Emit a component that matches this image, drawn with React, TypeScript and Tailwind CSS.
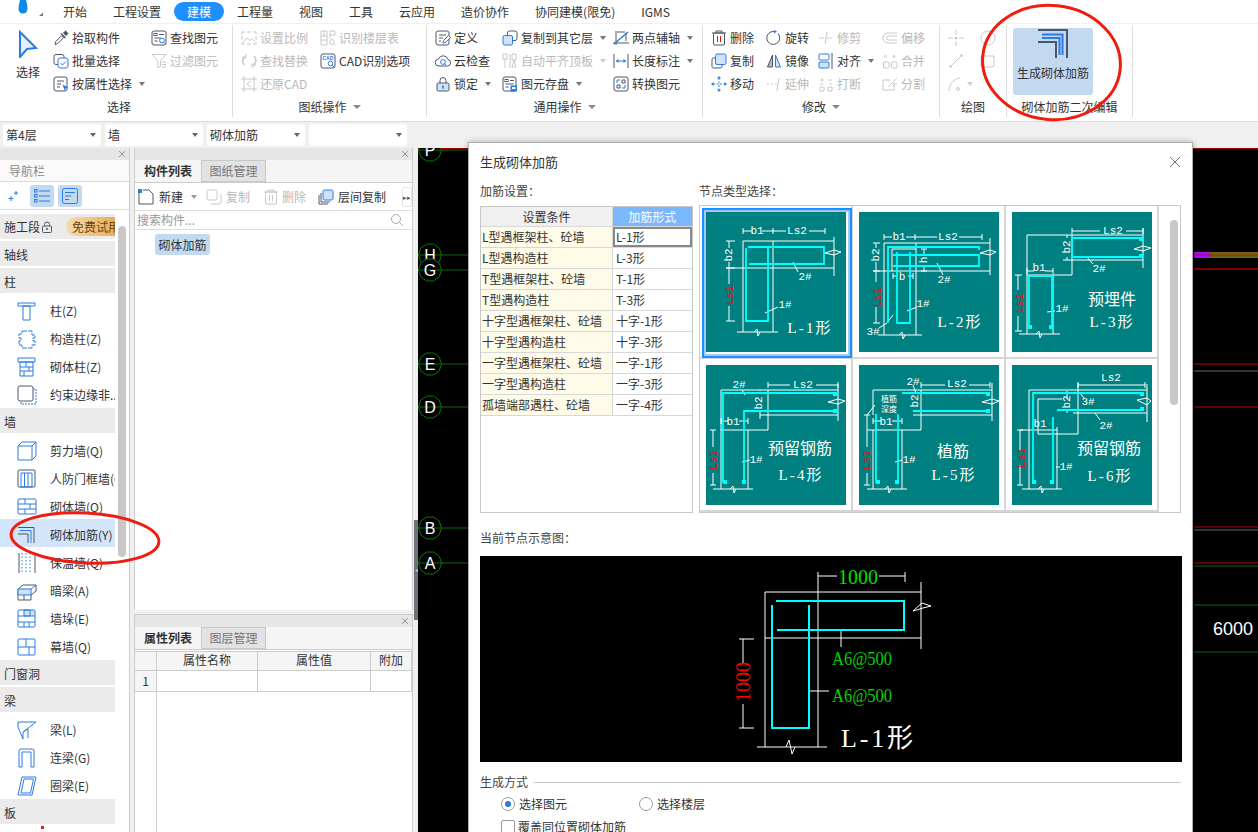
import React from "react";

const B = "#2a7be4";
const G = "#4e5666";
const L = "#c8c8c8";
const F = "#cfe2f8";

const S = ({ children, size = 16 }: { children: React.ReactNode; size?: number }) => (
  <svg width={size} height={size} viewBox="0 0 16 16" fill="none" className="shrink-0">
    {children}
  </svg>
);

const ic: Record<string, React.ReactNode> = {
  pick: <S><path d="M2 14.5l.8-3 5.7-5.7 2 2-5.7 5.7z" stroke={G} /><path d="M8 3.5l4.5 4.5" stroke={G} strokeWidth="1.5" /><path d="M10 3l2.5-2.5 3 3L13 6z" fill={G} /></S>,
  multi: <S><rect x="1" y="1.5" width="10" height="10" rx="2" stroke={G} /><rect x="5" y="5" width="10" height="10" rx="2" stroke={B} fill="#fff" /><path d="M7.5 10l2 2 3.5-3.5" stroke={B} /></S>,
  attr: <S><rect x="1" y="1" width="13" height="14" rx="2" stroke={G} /><path d="M4 5h7M4 8h4M4 11h3" stroke={G} /><path d="M9.5 8.5l6 3-2.7.8-1 2.7z" fill={B} /></S>,
  find: <S><rect x="1" y="1" width="14" height="14" rx="2" stroke={G} /><rect x="3" y="3.5" width="3" height="2" stroke={G} /><path d="M8 4.5h5M3.5 8h6M3.5 11h3" stroke={G} /><circle cx="11" cy="10.5" r="2.4" stroke={B} fill="#fff" /><path d="M12.8 12.3l2 2" stroke={B} /></S>,
  filter: <S><path d="M1 1.5h14L9.5 8v5.5L7 15V8z" stroke={L} /><path d="M11 9h4M11 11.5h4M11 14h4" stroke={L} /></S>,
  scale: <S><path d="M1 4V2h3M12 2h3v2M1 12v2h3M15 12v2h-3M6 2h4M6 14h4M1 6v4M15 6v4" stroke={L} /><path d="M2 12l4-4 3 2.5 2-2 3 3" stroke={L} /></S>,
  layer: <S><path d="M1 1h6v14H1zM1 6h6M1 10h6M4 1v5M10 1h5v4h-5zM10 5v4" stroke={L} /><circle cx="12" cy="12" r="2.4" stroke={L} /><path d="M14 14l1.5 1.5" stroke={L} /></S>,
  replace: <S><path d="M4 3A6.5 6.5 0 0 0 3 12M12 13a6.5 6.5 0 0 0 1-10" stroke={L} strokeWidth="1.5" /><path d="M5 1v4H1M11 15v-4h4" stroke={L} /></S>,
  cadback: <S><path d="M3 0v16M13 0v16M0 3h16M0 13h16" stroke={L} /><path d="M10 5L6 8l4 3" stroke={L} /></S>,
  cad: <S><rect x="1" y="1" width="14" height="14" rx="2" stroke={G} /><text x="2.5" y="7" fontSize="5" fontWeight="700" fill={B} fontFamily="Liberation Sans">CAD</text><circle cx="10.5" cy="10.5" r="2.3" stroke={B} /><path d="M12.2 12.2l2 2" stroke={B} /></S>,
  define: <S><rect x="1" y="1" width="13" height="14" rx="2" stroke={G} /><path d="M4 5h7M4 8h4M4 11h2" stroke={G} /><path d="M8 13l.5-2.5 5-5 2 2-5 5z" stroke={B} fill="#fff" /></S>,
  cloud: <S><path d="M4 13a3.5 3.5 0 0 1-.5-7A5 5 0 0 1 13 6.5 3.3 3.3 0 0 1 12.500 13z" stroke={G} /><circle cx="8" cy="9" r="2.4" stroke={B} /><path d="M9.800 10.800l1.500 1.500" stroke={B} /></S>,
  lock: <S><path d="M5 7V4.500a3 3 0 0 1 6 0V7" stroke={G} /><rect x="2" y="7" width="12" height="8" rx="1.500" stroke={G} fill={F} /><circle cx="8" cy="10.500" r="1" fill={B} /><path d="M8 11v2" stroke={B} /></S>,
  copyto: <S><rect x="5.500" y="1" width="9.500" height="9.500" rx="2" stroke={G} /><rect x="1" y="5.500" width="9.500" height="9.500" rx="1.500" stroke={B} fill={F} /></S>,
  align: <S><path d="M1 1h4v5H1zM3 6v9M8 1v14" stroke={L} /><path d="M10 1h4v6h-4zM12 7l-2 7h4z" stroke={L} /></S>,
  save: <S><rect x="1" y="1" width="13" height="14" rx="2" stroke={G} /><rect x="3" y="3.500" width="3" height="2" stroke={G} /><path d="M8 4.500h4M3.500 8h8M3.500 11h3" stroke={G} /><rect x="8.500" y="9.500" width="6.500" height="6" fill={B} /><rect x="10" y="11" width="3.500" height="2" fill="#fff" /></S>,
  twopt: <S><path d="M3 1v14M0 13h16" stroke={G} /><path d="M1 14L15 2" stroke={B} strokeWidth="1.500" /><path d="M4 2h8M13 3v8" stroke={G} /></S>,
  len: <S><path d="M1 1v14M15 1v14" stroke={G} /><path d="M3 8h10" stroke={B} /><path d="M3 8l2.500-2v4zM13 8l-2.500-2v4z" fill={B} /></S>,
  conv: <S><rect x="1" y="1" width="14" height="14" rx="2" stroke={G} /><path d="M4 7V4h3M9 12h3V9" stroke={B} /><path d="M9 4h3v3H9zM4 9h3v3H4z" stroke={G} /></S>,
  del: <S><path d="M1 3h14M5 3V1h6v2" stroke={G} /><rect x="2.500" y="3" width="11" height="12" rx="1" stroke={G} /><path d="M6.500 6v6M9.500 6v6" stroke="#e01818" /></S>,
  copy: <S><rect x="4.500" y="1" width="10.500" height="10.500" rx="1.500" stroke={B} fill={F} /><path d="M4.500 5H2.500A1.500 1.500 0 0 0 1 6.500v7A1.500 1.500 0 0 0 2.500 15h7a1.500 1.500 0 0 0 1.500-1.500v-2" stroke={G} /></S>,
  move: <S><path d="M8 2v12M2 8h12" stroke={B} strokeDasharray="2 1.500" /><path d="M8 0l2 2.500H6zM8 16l2-2.500H6zM0 8l2.500-2v4zM16 8l-2.500-2v4z" fill={B} /></S>,
  rotate: <S><path d="M12 3.500A6.500 6.500 0 1 1 8 1.500" stroke={G} /><path d="M8 0l3 1.500L8 3.500z" fill={B} /></S>,
  mirror: <S><path d="M6.500 2L1.500 14h5z" stroke={G} fill="#b4b9c2" /><path d="M9.500 2l5 12h-5z" stroke={B} fill={F} /></S>,
  arrange: <S><rect x="1" y="1" width="10" height="6" rx="1" stroke={B} /><rect x="1" y="9" width="10" height="6" rx="1" stroke={B} fill={F} /><path d="M14 0v16" stroke={G} /></S>,
  trim: <S><path d="M1 8h5M9 8h5M9 2L7 14" stroke={L} /></S>,
  extend: <S><path d="M1 8h2M5 8h2M9 8h2" stroke={L} /><path d="M13 2l-2 13" stroke={L} /></S>,
  brk: <S><path d="M2 15v-4h4v4zM10 15v-4h4v4z" stroke={L} /><circle cx="4" cy="4" r="1" stroke={L} /><path d="M10 4h4M2 8h3M11 8h3" stroke={L} /></S>,
  offset: <S><path d="M15 3H6a5 5 0 0 0 0 10h9M15 6H6.500a2 2 0 0 0 0 4H15" stroke={L} /></S>,
  merge: <S><rect x="1.500" y="9" width="5.500" height="6" rx="1" stroke={L} /><rect x="9.500" y="9" width="5.500" height="6" rx="1" stroke={L} /><circle cx="3.500" cy="3.500" r="1" stroke={L} /><circle cx="12" cy="3.500" r="1" stroke={L} /></S>,
  split: <S><path d="M12 7v7H1V4h7" stroke={L} /><path d="M15 2L6 11M15 8h-4" stroke={L} /></S>,
  pt: <S><path d="M8 0v5M8 11v5M0 8h5M11 8h5" stroke={L} /><circle cx="8" cy="8" r="1.500" fill={L} /></S>,
  circle: <S><circle cx="8" cy="8" r="7" stroke={L} /><circle cx="8" cy="8" r="1" fill={L} /></S>,
  line: <S><path d="M2 14L14 2" stroke={L} /><circle cx="2.500" cy="13.500" r="1" stroke={L} /><circle cx="13.500" cy="2.500" r="1" stroke={L} /></S>,
  rect: <S><path d="M3 3h11v9a2 2 0 0 1-2 2H1V3z" stroke={L} /></S>,
  arc: <S><path d="M1 15C1 8 5 3 12 2" stroke={L} /><circle cx="10" cy="13" r="1.500" stroke={L} /></S>,
  copyGray: <S><rect x="1" y="1" width="10" height="10" rx="1.500" stroke={L} /><path d="M5 15h8a2 2 0 0 0 2-2V5" stroke={L} /></S>,
  delGray: <S><path d="M1 3h14M5 3V1h6v2" stroke={L} /><rect x="2.500" y="3" width="11" height="12" rx="1" stroke={L} /><path d="M6.500 6v6M9.500 6v6" stroke={L} /></S>,
  newDoc: <S><path d="M1 4v11h14V5l-4-4H5" stroke={G} /><rect x="0" y="0" width="4" height="4" fill={B} /></S>,
  layerCopy: <S><rect x="5" y="1" width="10" height="10" rx="1.500" stroke={B} fill={F} /><path d="M3 4v9h9M1 6v9h9" stroke={G} /></S>,
  search: <S><circle cx="7" cy="7" r="4.500" stroke="#aaa" /><path d="M10.500 10.500l3.500 3.500" stroke="#aaa" /></S>,
};

function Item({ i, t, dis, arrow }: { i: string; t: string; dis?: boolean; arrow?: boolean }) {
  return (
    <div className={`flex h-[23px] items-center gap-[3px] whitespace-nowrap ${dis ? "text-[#b9b9b9]" : "text-[#333]"}`}>
      {ic[i]}
      <span>{t}</span>
      {arrow && <span className={`ml-[4px] h-0 w-0 border-x-[3px] border-t-[4px] border-x-transparent ${dis ? "border-t-[#ccc]" : "border-t-[#777]"}`} />}
    </div>
  );
}

function GroupLabel({ t, arrow, shift }: { t: string; arrow?: boolean; shift?: boolean }) {
  return (
    <div className={`mt-auto flex h-[20px] items-center justify-center gap-[6px] text-[#333] ${shift ? "pl-[6px]" : ""}`}>
      <span>{t}</span>
      {arrow && <span className="h-0 w-0 border-x-[4px] border-t-[4px] border-x-transparent border-t-[#888]" />}
    </div>
  );
}

function Ribbon() {
  return (
    <div className="flex h-[99px] border-b border-t border-[#dcdcdc] border-t-[#f0f0f0] bg-white text-[12px]">
      <div className="mt-[1px] flex h-[92px] w-[233px] flex-col border-r border-[#ddd]">
        <div className="flex pl-[14px] pt-[1px]">
          <div className="flex h-[69px] w-[28px] flex-col items-center pt-[4px]">
            <svg width="20" height="28" viewBox="0 0 20 28" fill="none"><path d="M2 2l16 16-9 1-7 8z" stroke={B} strokeWidth="2" fill="#e6f0fc" /></svg>
            <span className="mt-[6px] text-[#333]">选择</span>
          </div>
          <div className="ml-[11px] w-[98px]">
            <Item i="pick" t="拾取构件" /><Item i="multi" t="批量选择" /><Item i="attr" t="按属性选择" arrow />
          </div>
          <div><Item i="find" t="查找图元" /><Item i="filter" t="过滤图元" dis /></div>
        </div>
        <GroupLabel t="选择" shift />
      </div>
      <div className="mt-[1px] flex h-[92px] w-[194px] flex-col border-r border-[#ddd]">
        <div className="flex pl-[8px] pt-[1px]">
          <div className="w-[79px]"><Item i="scale" t="设置比例" dis /><Item i="replace" t="查找替换" dis /><Item i="cadback" t="还原CAD" dis /></div>
          <div><Item i="layer" t="识别楼层表" dis /><Item i="cad" t="CAD识别选项" /></div>
        </div>
        <GroupLabel t="图纸操作" arrow />
      </div>
      <div className="mt-[1px] flex h-[92px] w-[276px] flex-col border-r border-[#ddd]">
        <div className="flex pl-[8px] pt-[1px]">
          <div className="w-[67px]"><Item i="define" t="定义" /><Item i="cloud" t="云检查" /><Item i="lock" t="锁定" arrow /></div>
          <div className="w-[111px]"><Item i="copyto" t="复制到其它层" arrow /><Item i="align" t="自动平齐顶板" dis arrow /><Item i="save" t="图元存盘" arrow /></div>
          <div><Item i="twopt" t="两点辅轴" arrow /><Item i="len" t="长度标注" arrow /><Item i="conv" t="转换图元" /></div>
        </div>
        <GroupLabel t="通用操作" arrow />
      </div>
      <div className="mt-[1px] flex h-[92px] w-[237px] flex-col border-r border-[#ddd]">
        <div className="flex pl-[8px] pt-[1px]">
          <div className="w-[55px]"><Item i="del" t="删除" /><Item i="copy" t="复制" /><Item i="move" t="移动" /></div>
          <div className="w-[52px]"><Item i="rotate" t="旋转" /><Item i="mirror" t="镜像" /><Item i="extend" t="延伸" dis /></div>
          <div className="w-[64px]"><Item i="trim" t="修剪" dis /><Item i="arrange" t="对齐" arrow /><Item i="brk" t="打断" dis /></div>
          <div><Item i="offset" t="偏移" dis /><Item i="merge" t="合并" dis /><Item i="split" t="分割" dis /></div>
        </div>
        <GroupLabel t="修改" arrow />
      </div>
      <div className="mt-[1px] flex h-[92px] w-[67px] flex-col border-r border-[#ddd]">
        <div className="flex pl-[8px] pt-[1px]">
          <div className="w-[32px]">
            <div className="flex h-[23px] items-center">{ic.pt}</div>
            <div className="flex h-[23px] items-center">{ic.line}</div>
            <div className="flex h-[23px] items-center gap-[3px]">{ic.arc}<span className="h-0 w-0 border-x-[3px] border-t-[4px] border-x-transparent border-t-[#ccc]" /></div>
          </div>
          <div>
            <div className="flex h-[23px] items-center">{ic.circle}</div>
            <div className="flex h-[23px] items-center">{ic.rect}</div>
          </div>
        </div>
        <GroupLabel t="绘图" />
      </div>
      <div className="mt-[1px] flex h-[92px] w-[126px] flex-col border-r border-[#ddd]">
        <div className="ml-[6px] mt-[3px] flex h-[67px] w-[80px] flex-col items-center rounded-[3px] bg-[#c3d9f0] pt-[1px] text-[#333]">
          <svg width="30" height="30" viewBox="0 0 30 30" fill="none">
            <path d="M0 1H29V29" stroke={G} strokeWidth="2" />
            <path d="M4 5.500H24.500V26" stroke={B} strokeWidth="2" />
            <path d="M4 9H21.500V26" stroke={B} strokeWidth="2" />
            <path d="M0 13H18V29" stroke={G} strokeWidth="2" />
          </svg>
          <span className="mt-[6px] whitespace-nowrap">生成砌体加筋</span>
        </div>
        <GroupLabel t="砌体加筋二次编辑" />
      </div>
    </div>
  );
}

function TabBar() {
  const left = ["工程量", "视图", "工具", "云应用", "造价协作", "协同建模(限免)", "IGMS"];
  return (
    <div className="flex h-[23px] items-center bg-white text-[12px] text-[#333]">
      <div className="flex w-[63px] items-start self-stretch pl-[17px]">
        <svg width="26" height="17" viewBox="0 0 26 17" fill="none"><path d="M3 0h6c1 4 1.500 6 1.500 9a4.500 4.500 0 0 1-9 0C1.500 6 2 4 3 0z" fill="#0e8be8" /><path d="M22 16h4v-3.500z" fill="#777" /></svg>
      </div>
      <span>开始</span>
      <span className="ml-[26px]">工程设置</span>
      <span className="ml-[13px] flex h-[19px] w-[50px] items-center justify-center rounded-full bg-[#1e8fff] text-white">建模</span>
      <div className="ml-[13px] flex gap-[26px]">
        {left.map((t) => <span key={t} className="whitespace-nowrap">{t}</span>)}
      </div>
    </div>
  );
}

function Sel({ t }: { t: string }) {
  return (
    <div className="flex h-[22px] w-[98px] items-center justify-between rounded-[3px] bg-white pl-[3px] pr-[5px] text-[12px] text-[#333]">
      <span>{t}</span>
      <span className="h-0 w-0 border-x-[3px] border-t-[4px] border-x-transparent border-t-[#666]" />
    </div>
  );
}

function Strip() {
  return (
    <div className="flex h-[12px] items-center justify-end bg-[#e6e6e6] pr-[3px]">
      <svg width="8" height="8" viewBox="0 0 8 8"><path d="M1 1l6 6M7 1L1 7" stroke="#999" /></svg>
    </div>
  );
}

const N = ({ children }: { children: React.ReactNode }) => (
  <svg width="20" height="20" viewBox="0 0 20 20" fill="none" className="shrink-0">{children}</svg>
);

const navIcons: Record<string, React.ReactNode> = {
  col: <N><path d="M1 2h17v3H1zM6 5h7v14H6z" stroke={B} /></N>,
  gz: <N><path d="M5 2h10v4h3v3h-2v3h2v4h-3v3H5v-3H2v-4h2V9H2V5h3z" stroke={B} strokeDasharray="5 1" /></N>,
  qt: <N><path d="M1 1h17v4H1zM3 5h13v14H3zM3 10h13M3 14h13M9 5v5M12 10v4M7 14v5" stroke={B} /></N>,
  ys: <N><rect x="1" y="1" width="15" height="15" rx="2" stroke={G} /><path d="M16 4h3v15H4v-3" stroke={B} strokeDasharray="2 1" /></N>,
  jlq: <N><path d="M1 5h14v14H1zM1 5l4-4h14v14l-4 4M15 5l4-4" stroke={B} /></N>,
  rf: <N><rect x="1" y="1" width="17" height="17" rx="1" stroke={G} /><path d="M4 4h11v14H4zM7.500 4v14M11 4v14" stroke={B} /></N>,
  qtq: <N><rect x="1" y="2" width="18" height="15" rx="1" stroke={B} /><path d="M1 7h18M1 12h18M8 2v5M13 7v5M8 12v5" stroke={B} /></N>,
  jj: <N><path d="M1 2.500H17V18" stroke={G} /><path d="M3 5.500H14V18" stroke={B} /><path d="M1 9H11V18" stroke={G} /></N>,
  bw: <N><path d="M2 0v20M18 0v20" stroke={G} /><path d="M5 0v20M9 0v20M13 0v20" stroke={B} strokeDasharray="1.500 2" /></N>,
  al: <N><path d="M1 8l5-4h13v6l-5 4v5H1z" stroke={G} fill="#fff" /><path d="M1 8h13v6H1zM14 8l5-4" stroke={B} fill={F} /><path d="M7 14v5" stroke={G} /></N>,
  qd: <N><rect x="7" y="1" width="11" height="6" fill={F} /><rect x="1" y="1" width="17" height="17" rx="1" stroke={B} /><path d="M7 1v6h6V1zM1 7h17M1 13h17M7 13v5M12 13v5" stroke={B} /></N>,
  mq: <N><rect x="1" y="2" width="17" height="16" rx="1" stroke={B} /><path d="M1 10h17M9 2v8M12 10v8" stroke={B} /></N>,
  liang: <N><path d="M1 2h18L6 12v7L1 7zM6 12l5-3v9" stroke={B} /></N>,
  ll: <N><path d="M2 19V3a2 2 0 0 1 2-2h11a2 2 0 0 1 2 2v16h-3V4H5v15z" stroke={B} /></N>,
  ql: <N><path d="M5 1h14l-4 18H1zM7 3h9.500l-3 14H4z" stroke={B} /></N>,
};

function SecRow({ t }: { t: string }) {
  return <div className="mb-[2px] mt-[1px] flex h-[25px] items-center bg-[#ebebeb] pl-[4px] pt-[2px] text-[#333]">{t}</div>;
}

function NavItem({ i, t }: { i: string; t: string }) {
  return (
    <div className="flex h-[28px] items-center pl-[17px] pt-[3px]">
      {navIcons[i]}
      <span className="ml-[13px] overflow-hidden whitespace-nowrap text-[#333]">{t}</span>
    </div>
  );
}

function Nav() {
  return (
    <div className="flex w-[130px] shrink-0 flex-col border-r border-[#ccc] bg-white text-[12px]">
      <Strip />
      <div className="flex h-[22px] items-center border-b border-[#ddd] bg-[#fafafa] pl-[9px] text-[#888]">导航栏</div>
      <div className="flex h-[28px] items-center border-b border-[#ddd] pl-[8px]">
        <svg width="11" height="11" viewBox="0 0 11 11" fill="none"><path d="M3 6v5M.500 8.500h5M8 1v4M6 3h4" stroke={B} /></svg>
        <div className="ml-[11px] flex h-[22px] w-[24px] items-center justify-center rounded-[3px] bg-[#c3d9f0]">
          <svg width="16" height="14" viewBox="0 0 16 14" fill="none"><path d="M5 2h11M5 7h11M5 12h11" stroke={B} /><rect x="0.500" y="0.500" width="2.500" height="2.500" stroke={B} /><rect x="0.500" y="5.500" width="2.500" height="2.500" stroke={B} /><rect x="0.500" y="10.500" width="2.500" height="2.500" stroke={B} /></svg>
        </div>
        <div className="ml-[4px] flex h-[22px] w-[24px] items-center justify-center rounded-[3px] bg-[#c3d9f0]">
          <svg width="16" height="16" viewBox="0 0 16 16" fill="none"><rect x="0.500" y="0.500" width="15" height="15" rx="2" stroke={B} /><path d="M3 4.500h10M3 8h6M3 11.500h4" stroke={B} /></svg>
        </div>
      </div>
      <div className="flex min-h-0 flex-1">
        <div className="w-[115px] overflow-hidden pt-[3px]">
          <div className="mb-[2px] mt-[1px] flex h-[25px] items-center justify-between bg-[#ebebeb] pl-[4px] text-[#333]">
            <span className="flex items-center gap-[2px] whitespace-nowrap">施工段
              <svg width="10" height="12" viewBox="0 0 10 12" fill="none"><path d="M2.500 5V3.500a2.500 2.500 0 0 1 5 0V5" stroke={G} /><rect x="0.500" y="5" width="9" height="6.500" rx="1" stroke={G} /><circle cx="5" cy="8" r="1" fill={G} /></svg>
            </span>
            <span className="flex h-[19px] w-[49px] items-center whitespace-nowrap rounded-l-full bg-gradient-to-r from-[#f6dcb0] to-[#e8ad58] pl-[6px] text-[#6b4412]">免费试用</span>
          </div>
          <SecRow t="轴线" />
          <SecRow t="柱" />
          <NavItem i="col" t="柱(Z)" />
          <NavItem i="gz" t="构造柱(Z)" />
          <NavItem i="qt" t="砌体柱(Z)" />
          <NavItem i="ys" t="约束边缘非.." />
          <SecRow t="墙" />
          <NavItem i="jlq" t="剪力墙(Q)" />
          <NavItem i="rf" t="人防门框墙(Q)" />
          <NavItem i="qtq" t="砌体墙(Q)" />
          <div className="bg-[#d3e5fb]"><NavItem i="jj" t="砌体加筋(Y)" /></div>
          <NavItem i="bw" t="保温墙(Q)" />
          <NavItem i="al" t="暗梁(A)" />
          <NavItem i="qd" t="墙垛(E)" />
          <NavItem i="mq" t="幕墙(Q)" />
          <SecRow t="门窗洞" />
          <SecRow t="梁" />
          <NavItem i="liang" t="梁(L)" />
          <NavItem i="ll" t="连梁(G)" />
          <NavItem i="ql" t="圈梁(E)" />
          <SecRow t="板" />
          <div className="flex justify-center pr-[30px]"><span className="block h-[3px] w-[3px] bg-[#e02020]" /></div>
        </div>
        <div className="ml-[3px] mt-[16px] h-[331px] w-[8px] rounded-full bg-[#c8c8c8]" />
      </div>
    </div>
  );
}

function PanelTabs({ a, b }: { a: string; b: string }) {
  return (
    <div className="flex h-[23px] border-b border-[#ccc] bg-[#f5f5f5]">
      <div className="flex w-[66px] items-center justify-center font-bold text-[#333]">{a}</div>
      <div className="flex w-[65px] items-center justify-center border border-[#c8c8c8] bg-[#e2e2e2] text-[#777]">{b}</div>
    </div>
  );
}

function Mid() {
  return (
    <div className="flex w-[279px] shrink-0 flex-col bg-[#f0f0f0] text-[12px] text-[#333]">
      <div className="flex h-[462px] flex-col border-x border-[#ccc] bg-white">
        <Strip />
        <PanelTabs a="构件列表" b="图纸管理" />
        <div className="flex h-[28px] items-center whitespace-nowrap border-b border-[#ddd] pl-[3px]">
          {ic.newDoc}
          <span className="ml-[5px] shrink-0">新建</span>
          <span className="ml-[8px] h-0 w-0 shrink-0 border-x-[3px] border-t-[4px] border-x-transparent border-t-[#999]" />
          <span className="ml-[9px] shrink-0">{ic.copyGray}</span>
          <span className="ml-[4px] shrink-0 text-[#b9b9b9]">复制</span>
          <span className="ml-[13px] shrink-0">{ic.delGray}</span>
          <span className="ml-[3px] shrink-0 text-[#b9b9b9]">删除</span>
          <span className="ml-[12px] shrink-0">{ic.layerCopy}</span>
          <span className="ml-[4px] shrink-0">层间复制</span>
          <span className="ml-[16px] flex h-[20px] w-[10px] shrink-0 items-center justify-center rounded-[2px] border border-[#e5e5e5] text-[7px] text-[#555]">▸▸</span>
        </div>
        <div className="flex h-[19px] items-center justify-between border-b border-[#ddd] pl-[2px] pr-[7px] text-[#999]">
          <span>搜索构件...</span>
          {ic.search}
        </div>
        <div className="flex-1 pl-[20px] pt-[4px]">
          <div className="flex h-[21px] w-[55px] items-center justify-center whitespace-nowrap rounded-[3px] bg-[#c3d9f0]">砌体加筋</div>
        </div>
      </div>
      <div className="h-[4px] bg-[#f0f0f0]" />
      <div className="flex min-h-0 flex-1 flex-col border-x border-t border-[#ccc] bg-white">
        <Strip />
        <PanelTabs a="属性列表" b="图层管理" />
        <div className="flex-1 pt-[1px]">
          <div className="flex h-[20px] border-y border-[#ccc] bg-[#f5f5f5] text-center">
            <div className="w-[22px] border-r border-[#ccc]" />
            <div className="w-[101px] border-r border-[#ccc]">属性名称</div>
            <div className="w-[113px] border-r border-[#ccc]">属性值</div>
            <div className="w-[41px] border-r border-[#ccc]">附加</div>
          </div>
          <div className="flex h-[21px] border-b border-[#ccc]">
            <div className="flex w-[22px] items-center justify-center border-r border-[#ccc] bg-[#f5f5f5]">1</div>
            <div className="w-[101px] border-r border-[#ccc]" />
            <div className="w-[113px] border-r border-[#ccc]" />
            <div className="w-[41px] border-r border-[#ccc]" />
          </div>
          <div className="h-[140px] w-[22px] border-r border-[#ccc]" />
        </div>
      </div>
    </div>
  );
}

const Axis = ({ y, t }: { y: number; t: string }) => {
  const r = 11.5;
  const pts = Array.from({ length: 10 }, (_, k) => {
    const a = (k / 10) * Math.PI * 2;
    return `${12 + r * Math.cos(a)},${y + r * Math.sin(a)}`;
  }).join(" ");
  return (
    <g>
      <polygon points={pts} stroke="#0a7a0a" fill="#000" />
      <path d={`M0 ${y}H60`} stroke="#0a6a0a" />
      <text x="12" y={y + 5.5} textAnchor="middle" fontSize="16" fill="#fff" fontFamily="Liberation Sans">{t}</text>
    </g>
  );
};

function Canvas() {
  return (
    <div className="flex-1 bg-black">
      <svg width="840" height="684" viewBox="0 0 840 684" fill="none" className="block">
        <path d="M0 0.500H840" stroke="#a00000" />
        <Axis y={2} t="P" />
        <Axis y={107} t="H" />
        <Axis y={122} t="G" />
        <Axis y={216} t="E" />
        <Axis y={259} t="D" />
        <Axis y={380} t="B" />
        <Axis y={415} t="A" />
        <rect x="776" y="104" width="16" height="6" fill="#a010f0" />
        <rect x="792" y="104" width="48" height="6" fill="#6a6410" />
        <path d="M776 107H840" stroke="#c00000" opacity="0.600" />
        <path d="M776 121H840" stroke="#7a0000" strokeWidth="2" />
        <path d="M776 216H840" stroke="#c00000" />
        <path d="M776 223H840" stroke="#333" strokeWidth="2" />
        <path d="M776 259H840" stroke="#c00000" />
        <path d="M776 379H840" stroke="#c00000" />
        <path d="M776 382H840" stroke="#333" strokeWidth="2" />
        <path d="M776 415H840" stroke="#c00000" />
        <path d="M776 418H840" stroke="#0a6a0a" />
        <path d="M776 457H840" stroke="#0a6a0a" />
        <path d="M776 504H840" stroke="#0a6a0a" />
        <text x="815" y="487" textAnchor="middle" fontSize="18" fill="#fff" fontFamily="Liberation Sans">6000</text>
      </svg>
    </div>
  );
}

const Tx = ({ x, y, t, size = 11, fill = "#fff", rot, font = "Liberation Mono", len }: { x: number; y: number; t: string; size?: number; fill?: string; rot?: boolean; font?: string; len?: number }) => (
  <text x={x} y={y} textAnchor="middle" dominantBaseline="central" fontSize={size} fill={fill} fontFamily={font} textLength={len} lengthAdjust={len ? "spacing" : undefined} transform={rot ? `rotate(-90 ${x} ${y})` : undefined}>{t}</text>
);

const SANS = "Noto Sans CJK SC";
const SERIF = "Liberation Serif, Noto Sans CJK SC";

function Thumb({ white, cyan, blobs = [], children }: { white: string; cyan: string; blobs?: number[][]; children: React.ReactNode }) {
  return (
    <svg width="140" height="140" viewBox="0 0 140 140" fill="none" className="block bg-[#008080]">
      <path d={white} stroke="#fff" />
      <path d={cyan} stroke="#00ffff" strokeWidth="1.800" />
      {blobs.map((b, k) => <rect key={k} x={b[0]} y={b[1]} width="4" height="4" fill="#00ffff" />)}
      {children}
    </svg>
  );
}

const thumbs = [
  <Thumb key="1"
    white="M37 29V120M37 29H128M128 25V64M20 56H128M67 29V120M31 120H72M37 19H46M56 19H80M103 19H119M37 16V22M67 16V22M119 16V22M23 29V36M23 50V72M23 94V109M20 29H29M20 56H29M20 109H29M87 50L92 60M59 101L72 95M119 41L128 38L135 40L128 43ZM48 120L51 117L52 124L54 120"
    cyan="M40 36V109H62V36M42 35H118V52H43">
    <Tx x={51} y={19} t="b1" /><Tx x={91} y={19} t="Ls2" /><Tx x={23} y={43} t="b2" rot /><Tx x={24} y={83} t="Ls1" rot fill="#ff0000" />
    <Tx x={99} y={65} t="2#" /><Tx x={79} y={93} t="1#" /><Tx x={103} y={116} t="L-1形" size={15} font={SERIF} len={43} />
  </Thumb>,
  <Thumb key="2"
    white="M25 31V123M25 31H131M131 26V63M14 59H131M57 31V123M19 123H63M33 37H57M33 37V59M25 25H33M47 25H78M100 25H123M25 22V28M56 22V28M123 22V28M17 31V36M17 50V70M17 95V111M14 31H21M14 59H21M14 111H21M34 64H38M49 64H54M34 61V67M54 61V67M65 37V43M65 53V59M62 37H68M62 59H68M28 111L34 103M20 116L28 111M78 51L84 63M48 99L58 95M121 41L131 38L137 40L131 43ZM40 123L43 120L44 127L46 123"
    cyan="M29 111V35H120V38M38 40V111H51V40M34 43H120V54H34">
    <Tx x={40} y={25} t="b1" /><Tx x={89} y={25} t="Ls2" /><Tx x={17} y={43} t="b2" rot /><Tx x={19} y={85} t="Ls1" rot fill="#ff0000" />
    <Tx x={43} y={65} t="b" /><Tx x={65} y={48} t="h" rot /><Tx x={85} y={68} t="2#" /><Tx x={64} y={92} t="1#" /><Tx x={14} y={120} t="3#" />
    <Tx x={100} y={110} t="L-2形" size={15} font={SERIF} len={43} />
  </Thumb>,
  <Thumb key="3"
    white="M15 23V122M15 23H131M131 16V56M60 23V63M15 63H60M51 48H131M41 63V122M7 122H48M60 19H88M114 19H131M60 16V22M131 16V22M15 59H22M33 59H41M15 56V62M41 56V62M6 63V78M6 104V119M3 63H10M3 119H10M55 23V26M55 45V48M35 100L43 99M74 44L81 52M122 37L131 34L139 36L131 39ZM24 122L27 119L28 126L30 122"
    cyan="M17 116V64H40V116M130 26H60V45H130"
    blobs={[[16, 113], [37, 113], [127, 25], [127, 42]]}>
    <Tx x={101} y={19} t="Ls2" /><Tx x={55} y={35} t="b2" rot /><Tx x={27} y={56} t="b1" /><Tx x={8} y={91} t="Ls1" rot fill="#ff0000" />
    <Tx x={50} y={97} t="1#" /><Tx x={87} y={57} t="2#" /><Tx x={100} y={86} t="预埋件" size={16} font={SANS} /><Tx x={99} y={110} t="L-3形" size={15} font={SERIF} len={43} />
  </Thumb>,
  <Thumb key="4"
    white="M15 25V124M15 25H132M132 19V56M62 25V65M15 65H62M54 50H132M42 65V124M7 124H47M62 20H84M110 20H132M62 17V23M132 17V23M15 56H22M33 56H42M15 53V59M42 53V59M7 65V82M7 108V120M4 65H10M4 120H10M54 25V26M54 47V54M36 25L39 30M36 97L44 95M122 37L132 34L139 36L132 39ZM24 124L27 121L28 128L30 124"
    cyan="M17 118V28H131M38 118V46H131"
    blobs={[[17, 115], [36, 115], [127, 27], [127, 44]]}>
    <Tx x={97} y={20} t="Ls2" /><Tx x={33} y={20} t="2#" /><Tx x={53} y={38} t="b2" rot /><Tx x={27} y={57} t="b1" /><Tx x={8} y={95} t="Ls1" rot fill="#ff0000" />
    <Tx x={50} y={95} t="1#" /><Tx x={94} y={82} t="预留钢筋" size={16} font={SANS} /><Tx x={94} y={110} t="L-4形" size={15} font={SERIF} len={43} />
  </Thumb>,
  <Thumb key="5"
    white="M14 25V50M14 25H133M133 18V56M62 25V65M8 65H62M54 50H133M8 124H48M14 65V124M43 65V124M62 20H86M110 20H131M62 17V23M131 17V23M14 56H22M33 56H43M14 53V59M43 53V59M8 50V82M8 108V120M5 120H11M5 50H11M8 50L16 40M54 20L57 28M36 97L44 95M123 37L133 34L140 36L133 39ZM26 124L29 121L30 128L32 124"
    cyan="M17 118V49M39 118V49M43 28H131M54 46H131"
    blobs={[[17, 115], [36, 115], [127, 27], [127, 44]]}>
    <Tx x={30} y={33} t="植筋" size={8} font={SANS} /><Tx x={30} y={43} t="深度" size={8} font={SANS} />
    <Tx x={54} y={17} t="2#" /><Tx x={98} y={19} t="Ls2" /><Tx x={56} y={36} t="b2" rot /><Tx x={27} y={57} t="b1" /><Tx x={8} y={95} t="Ls1" rot fill="#ff0000" />
    <Tx x={50} y={95} t="1#" /><Tx x={94} y={85} t="植筋" size={16} font={SANS} /><Tx x={94} y={110} t="L-5形" size={15} font={SERIF} len={43} />
  </Thumb>,
  <Thumb key="6"
    white="M17 25V124M17 25H135M135 19V57M66 18V69M26 69H66M26 34V69M26 34H50M61 48H135M45 62V124M8 65H45M10 124H50M66 20H133M66 17V23M133 17V23M8 65V85M8 100V120M5 120H11M5 65H11M55 26V34M55 46V48M68 28L72 33M83 48L88 55M44 102L48 102M125 35L135 33L139 36L135 40ZM26 124L29 121L30 128L32 124"
    cyan="M21 118V28H132M45 45H132M40 53H41V118"
    blobs={[[20, 115], [38, 115], [128, 27], [128, 42]]}>
    <Tx x={99} y={13} t="Ls2" /><Tx x={55} y={37} t="b2" rot /><Tx x={76} y={37} t="3#" /><Tx x={94} y={61} t="2#" /><Tx x={28} y={59} t="b1" />
    <Tx x={10} y={93} t="Ls1" rot fill="#ff0000" /><Tx x={54} y={102} t="1#" /><Tx x={97} y={82} t="预留钢筋" size={16} font={SANS} /><Tx x={97} y={111} t="L-6形" size={15} font={SERIF} len={43} />
  </Thumb>,
];

function BigDrawing() {
  return (
    <svg width="702" height="206" viewBox="0 0 702 206" fill="none" className="block bg-black">
      <path d="M285 36H441M285 36V191M338 26V191M441 26V93M285 82H441M259 83H274M259 172H274M263 83V107M263 148V172M277 191H347M338 20H357M399 20H425M338 16V26M425 16V26M361 74V91M330 135H349M433 55L443 52L451 50L442 47ZM306 191L309 184L312 198L315 191" stroke="#fff" />
      <path d="M292 49V172H329V49M296 45H424V74H297" stroke="#00ffff" strokeWidth="2" />
      <Tx x={378} y={21} t="1000" size={20} fill="#00e000" font="Liberation Serif" />
      <Tx x={263} y={126} t="1000" size={20} fill="#ff0000" rot font="Liberation Serif" />
      <text x="352" y="109" fontSize="18" fill="#00d000" fontFamily="Liberation Serif" textLength="60" lengthAdjust="spacingAndGlyphs">A6@500</text>
      <text x="352" y="146" fontSize="18" fill="#00d000" fontFamily="Liberation Serif" textLength="60" lengthAdjust="spacingAndGlyphs">A6@500</text>
      <Tx x={397} y={182} t="L-1形" size={26} font={SERIF} len={72} />
    </svg>
  );
}

const rows = [
  ["L型遇框架柱、砼墙", "L-1形"], ["L型遇构造柱", "L-3形"], ["T型遇框架柱、砼墙", "T-1形"], ["T型遇构造柱", "T-3形"],
  ["十字型遇框架柱、砼墙", "十字-1形"], ["十字型遇构造柱", "十字-3形"], ["一字型遇框架柱、砼墙", "一字-1形"], ["一字型遇构造柱", "一字-3形"], ["孤墙端部遇柱、砼墙", "一字-4形"],
];

function Dialog() {
  return (
    <div className="absolute left-[468px] top-[142px] h-[700px] w-[725px] border-l border-r border-t border-[#b0b0b0] bg-white px-[11px] text-[12px] text-[#444] shadow-[0_0_6px_rgba(0,0,0,0.3)]">
      <div className="flex h-[39px] items-center justify-between pb-[2px] text-[13px] text-[#333]">
        <span>生成砌体加筋</span>
        <svg width="12" height="12" viewBox="0 0 12 12"><path d="M1 1l10 10M11 1L1 11" stroke="#777" /></svg>
      </div>
      <div className="flex h-[18px] items-center">
        <span className="w-[219px]">加筋设置：</span>
        <span>节点类型选择：</span>
      </div>
      <div className="mt-[5px] flex gap-[6px]">
        <div className="mt-[1px] h-[307px] w-[213px] border border-[#c8c8c8]">
          <div className="flex h-[20px] border-b border-[#d8d8d8]">
            <div className="flex w-[132px] items-center justify-center border-r border-[#d8d8d8] bg-[#f0f0f0] text-[#333]">设置条件</div>
            <div className="flex flex-1 items-center justify-center bg-[#7ab8fb] text-white">加筋形式</div>
          </div>
          {rows.map((r, k) => (
            <div key={r[1]} className="flex h-[21px] border-b border-[#d8d8d8] text-[#333]">
              <div className="flex w-[132px] items-center whitespace-nowrap border-r border-[#d8d8d8] bg-[#fefbe8] pl-[1px]">{r[0]}</div>
              <div className={`flex flex-1 items-center ${k === 0 ? "border-2 border-[#888] pl-[1px]" : "pl-[3px]"}`}>{r[1]}</div>
            </div>
          ))}
        </div>
        <div className="flex h-[308px] w-[483px] border border-[#c8c8c8]">
          <div className="grid w-[459px] grid-cols-3">
            {thumbs.map((t, k) => (
              <div key={k} className="relative h-[153px] w-[153px] border-b-2 border-r-2 border-[#d6d6d6] pl-[6px] pt-[6px]">
                {t}
                {k === 0 && <div className="absolute left-[2px] top-[2px] h-[150px] w-[150px] border-2 border-[#1890ff] shadow-[inset_0_0_0_2px_#a0c8fb]" />}
              </div>
            ))}
          </div>
          <div className="ml-[11px] mt-[14px] h-[185px] w-[8px] rounded-full bg-[#c8c8c8]" />
        </div>
      </div>
      <div className="mt-[16px] flex h-[18px] items-center">当前节点示意图：</div>
      <div className="mt-[9px]"><BigDrawing /></div>
      <div className="mt-[11px] flex h-[18px] items-center">
        <span>生成方式</span>
        <div className="ml-[6px] h-px flex-1 bg-[#c8c8c8]" />
      </div>
      <div className="mt-[4px] flex h-[18px] items-center pl-[21px] text-[#333]">
        <div className="flex w-[138px] items-center gap-[4px]">
          <span className="flex h-[14px] w-[14px] items-center justify-center rounded-full border border-[#999]"><span className="h-[6px] w-[6px] rounded-full bg-[#2a7be4]" /></span>
          选择图元
        </div>
        <div className="flex items-center gap-[4px]">
          <span className="h-[14px] w-[14px] rounded-full border border-[#999]" />
          选择楼层
        </div>
      </div>
      <div className="mt-[5px] flex h-[18px] items-center gap-[3px] pl-[21px] text-[#333]">
        <span className="h-[14px] w-[14px] rounded-[2px] border border-[#999]" />
        覆盖同位置砌体加筋
      </div>
    </div>
  );
}

export default function App() {
  return (
    <div className="relative flex h-[832px] w-[1258px] flex-col overflow-hidden bg-white font-['Noto_Sans_CJK_SC','Liberation_Sans',sans-serif] leading-[16px]">
      <TabBar />
      <Ribbon />
      <div className="flex h-[26px] items-center gap-[4px] bg-[#f0f0f0] pl-[3px]">
        <Sel t="第4层" /><Sel t="墙" /><Sel t="砌体加筋" /><Sel t="" />
      </div>
      <div className="flex min-h-0 flex-1 bg-[#f0f0f0]">
        <Nav />
        <div className="w-[4px] shrink-0" />
        <Mid />
        <div className="flex w-[5px] shrink-0 flex-col pt-[372px]">
          <div className="ml-[1px] flex h-[100px] w-[4px] items-center justify-center bg-[#6c7480] text-[6px] leading-none text-[#ccc]">◂</div>
        </div>
        <Canvas />
      </div>
      <Dialog />
      <svg width="1258" height="832" viewBox="0 0 1258 832" fill="none" className="pointer-events-none absolute left-0 top-0">
        <ellipse cx="1051.5" cy="62.5" rx="69" ry="57" stroke="#f01c10" strokeWidth="3" transform="rotate(6 1051.5 62.5)" />
        <ellipse cx="85" cy="538" rx="74" ry="25" stroke="#f01c10" strokeWidth="3" transform="rotate(3 85 538)" />
      </svg>
    </div>
  );
}
